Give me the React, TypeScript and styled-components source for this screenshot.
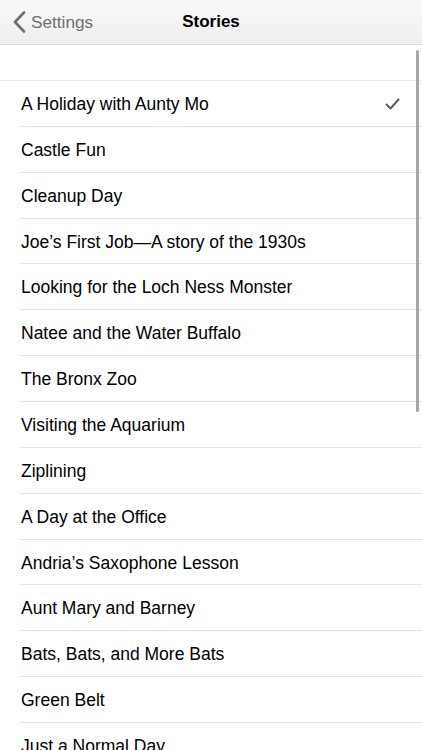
import React from "react";
import styled, { createGlobalStyle } from "styled-components";

const Global = createGlobalStyle`
  html, body { margin: 0; padding: 0; background: #fff; }
  body { font-family: "Liberation Sans", Arial, sans-serif; -webkit-font-smoothing: antialiased; }
  * { box-sizing: border-box; }
`;

const Page = styled.div`
  position: relative;
  width: 422px;
  height: 750px;
  overflow: hidden;
  background: #fff;
`;

const NavBar = styled.div`
  height: 45px;
  display: grid;
  grid-template-columns: 1fr auto 1fr;
  align-items: center;
  background: linear-gradient(#f9f9f9, #eeeeee);
  border-bottom: 1px solid #dcdcdc;
`;

const Back = styled.div`
  display: flex;
  align-items: center;
  gap: 5px;
  padding-left: 13px;
  color: #6d6e73;
  font-size: 17.2px;
`;

const Title = styled.div`
  font-size: 17px;
  font-weight: 700;
  color: #000;
`;

const Spacer = styled.div`
  height: 36px;
  border-bottom: 1px solid #e8e8e8;
`;

const List = styled.div`
  display: flex;
  flex-direction: column;
`;

const Row = styled.div`
  height: 45.86px;
  margin-left: 20px;
  padding-left: 1px;
  padding-right: 22px;
  padding-top: 2px;
  display: flex;
  align-items: center;
  justify-content: space-between;
  border-bottom: 1px solid #e3e3e3;
  font-size: 17.5px;
  color: #000;
`;

const Scrollbar = styled.div`
  position: absolute;
  right: 3px;
  top: 50px;
  width: 3px;
  height: 362px;
  border-radius: 2px;
  background: #a6a6a6;
`;

const stories = [
  "A Holiday with Aunty Mo",
  "Castle Fun",
  "Cleanup Day",
  "Joe\u2019s First Job\u2014A story of the 1930s",
  "Looking for the Loch Ness Monster",
  "Natee and the Water Buffalo",
  "The Bronx Zoo",
  "Visiting the Aquarium",
  "Ziplining",
  "A Day at the Office",
  "Andria\u2019s Saxophone Lesson",
  "Aunt Mary and Barney",
  "Bats, Bats, and More Bats",
  "Green Belt",
  "Just a Normal Day",
];

export default function App() {
  return (
    <Page>
      <Global />
      <NavBar>
        <Back>
          <svg width="13" height="22" viewBox="0 0 13 22">
            <path d="M11 1.5 L2 11 L11 20.5" fill="none" stroke="#6d6e73" strokeWidth="2.6" strokeLinecap="round" strokeLinejoin="round" />
          </svg>
          Settings
        </Back>
        <Title>Stories</Title>
        <div />
      </NavBar>
      <Spacer />
      <List>
        {stories.map((s, i) => (
          <Row key={s}>
            <span>{s}</span>
            {i === 0 && (
              <svg width="15" height="12" viewBox="0 0 15 12">
                <path d="M1.5 6.5 L5.5 10.5 L13.5 1.5" fill="none" stroke="#595d69" strokeWidth="2" strokeLinecap="round" strokeLinejoin="round" />
              </svg>
            )}
          </Row>
        ))}
      </List>
      <Scrollbar />
    </Page>
  );
}
